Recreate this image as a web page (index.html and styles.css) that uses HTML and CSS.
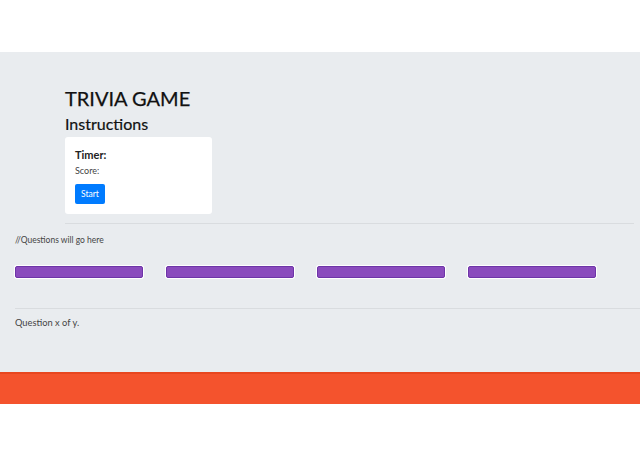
FILE: index.html
```html
<!DOCTYPE html>
<html>
<head>
<meta charset="utf-8">
<link rel="stylesheet" href="styles.css">
</head>
<body>
<div class="topgap"></div>
<main class="jumbo">
  <section class="intro">
    <h1 class="title">TRIVIA GAME</h1>
    <h2 class="subtitle">Instructions</h2>
    <div class="card">
      <div class="timer">Timer:</div>
      <div class="score">Score:</div>
      <button class="start">Start</button>
    </div>
    <hr class="rule rule-intro">
  </section>
  <section class="questions">
    <p class="note">//Questions will go here</p>
    <div class="answers">
      <div class="bar"></div>
      <div class="bar"></div>
      <div class="bar"></div>
      <div class="bar"></div>
    </div>
    <hr class="rule rule-q">
    <p class="count">Question x of y.</p>
  </section>
</main>
<footer class="footer"></footer>
</body>
</html>
```

FILE: styles.css
```css
* { box-sizing: border-box; }
html, body { margin: 0; padding: 0; background: #fff; }
body { font-family: Lato, "Open Sans", sans-serif; color: #212529; }

.topgap { height: 52px; }

.jumbo {
  background: #e9ecef;
  height: 320px;
  padding-top: 33px;
  display: flex;
  flex-direction: column;
}

.intro { padding-left: 65px; padding-right: 6px; }

.title {
  margin: 0;
  font-size: 20px;
  font-weight: 400;
  line-height: 26px;
  color: #111;
  -webkit-text-stroke: 0.25px #111;
}
.subtitle {
  margin: 0;
  font-size: 16px;
  font-weight: 400;
  line-height: 26px;
  color: #111;
  -webkit-text-stroke: 0.2px #111;
}

.card {
  margin-top: 0;
  width: 147px;
  height: 77px;
  background: #fff;
  border-radius: 3px;
  padding: 10px 10px;
  display: flex;
  flex-direction: column;
  align-items: flex-start;
}
.timer {
  font-size: 11px;
  font-weight: 700;
  line-height: 15px;
  color: #222;
}
.score {
  margin-top: 3px;
  font-size: 9px;
  line-height: 12px;
  color: #444;
}
.start {
  margin-top: 7px;
  width: 30px;
  height: 20px;
  padding: 0;
  border: none;
  border-radius: 2px;
  background: #007bff;
  color: #fff;
  font-family: inherit;
  font-size: 8.5px;
  line-height: 20px;
}

.rule {
  border: 0;
  height: 1px;
  background: #d9dcdf;
  margin: 0;
}
.rule-intro { margin-top: 9px; }

.questions { padding-left: 15px; }
.note {
  margin: 10px 0 0;
  font-size: 8.5px;
  line-height: 12px;
  color: #444;
}
.answers {
  margin-top: 20px;
  display: flex;
  gap: 23px;
}
.bar {
  width: 128px;
  height: 12px;
  background: #8a4bbd;
  border: 1px solid #6e35a8;
  border-radius: 2px;
  box-shadow: 0 0 0 1px #fff;
}
.rule-q { margin-top: 30px; }
.count {
  margin: 7px 0 0;
  font-size: 9.3px;
  line-height: 13px;
  color: #444;
}

.footer {
  height: 32px;
  background: #f4532d;
  border-top: 2px solid #e8461f;
}
```
